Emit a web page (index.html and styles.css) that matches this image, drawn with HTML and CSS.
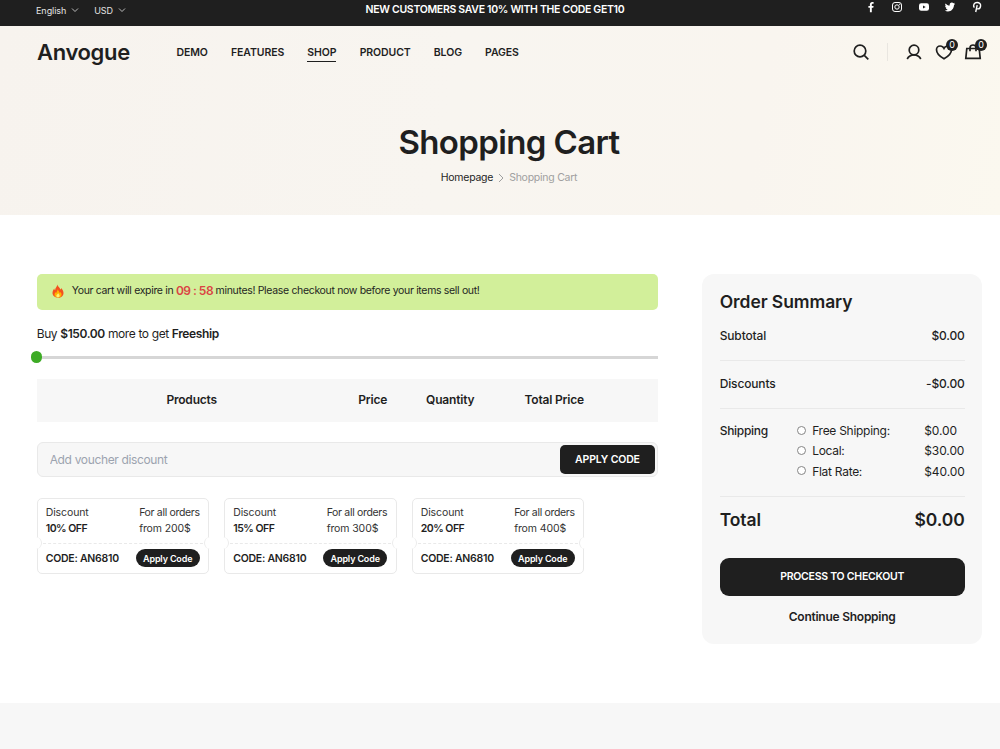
FILE: index.html
```html
<!DOCTYPE html>
<html lang="en">
<head>
    <meta charset="UTF-8">
    <meta name="viewport" content="width=device-width, initial-scale=1.0">
    <title>Anvogue - Shopping Cart</title>
    <link rel="stylesheet" href="styles.css">
</head>
<body>
    <div class="top-nav">
        <div class="top-left">
            <div class="choose"><span class="lang">English</span><svg class="caret" viewBox="0 0 8 8"><path d="M1 2.5l3 3 3-3"/></svg></div>
            <div class="choose"><span class="currency">USD</span><svg class="caret" viewBox="0 0 8 8"><path d="M1 2.5l3 3 3-3"/></svg></div>
        </div>
        <div class="top-text"><span>NEW CUSTOMERS SAVE 10% WITH THE CODE GET10</span></div>
        <div class="socials">
            <svg viewBox="0 0 12 12"><path fill="#fff" d="M4.9 11.2V6.8H3.4V4.900h1.500V3.500C4.900 1.900 5.800 1 7.200 1h1.400v1.700h-.9c-.7 0-.9.3-.9.9v1.300h1.800l-.3 1.900H6.800v4.400z"/></svg>
            <svg viewBox="0 0 12 12"><g fill="none" stroke="#fff"><rect x="1.500" y="1.500" width="9" height="9" rx="2.500"/><circle cx="6" cy="6" r="2.200"/></g><circle cx="8.700" cy="3.300" r=".6" fill="#fff"/></svg>
            <svg viewBox="0 0 12 12"><rect x="1" y="2.200" width="10" height="7.600" rx="2.200" fill="#fff"/><path fill="#1f1f1f" d="M5 4.400L7.700 6 5 7.600z"/></svg>
            <svg viewBox="0 0 12 12"><path fill="#fff" d="M11 3.100l-1 .9c-.1 3.800-2.700 6.400-6 6.400-1.200 0-2.300-.3-3.100-.9 1.100 0 2.100-.4 2.800-1C2.700 8.300 2.100 7.700 1.900 7h.8C1.700 6.600 1.200 5.800 1.200 4.900l.8.2C1.100 4.400 1 3.300 1.500 2.400 2.600 3.700 4 4.400 5.700 4.500c-.3-1.700.8-2.900 2.200-2.900.7 0 1.200.3 1.600.7.500-.1.900-.3 1.300-.5-.1.500-.4.900-.8 1.200z"/></svg>
            <svg viewBox="0 0 12 12"><path d="M3.300 6.700C1.600 4.200 3.300 1.500 6.100 1.500c2.400 0 3.700 1.600 3.500 3.400-.2 2-1.500 3.100-2.800 3-.8 0-1.300-.5-1.500-.9M6.200 4.100L4.700 11" fill="none" stroke="#fff" stroke-width="1.400"/></svg>
        </div>
    </div>

    <div class="hero">
        <div class="header">
            <a class="logo">Anvogue</a>
            <ul class="menu">
                <li>DEMO</li>
                <li>FEATURES</li>
                <li class="active">SHOP</li>
                <li>PRODUCT</li>
                <li>BLOG</li>
                <li>PAGES</li>
            </ul>
            <div class="actions">
                <svg class="icon search" viewBox="0 0 18 18"><circle cx="8" cy="8" r="5.800"/><path d="M12.300 12.300l4 4"/></svg>
                <svg class="icon user" viewBox="0 0 18 18"><circle cx="9" cy="7" r="4.800"/><path d="M2.200 16c1.300-2.500 3.900-4.200 6.800-4.200s5.500 1.700 6.800 4.200"/></svg>
                <div class="badge-icon">
                    <svg class="icon" viewBox="0 0 18 18"><path d="M9 15.700S1.500 11.600 1.500 6.700C1.500 4.600 3.100 3 5.100 3 6.900 3 8.300 4 9 5.400 9.700 4 11.100 3 12.900 3c2 0 3.600 1.600 3.600 3.700C16.500 11.600 9 15.700 9 15.700z"/></svg>
                    <span class="badge">0</span>
                </div>
                <div class="badge-icon bag">
                    <svg class="icon" viewBox="0 0 18 18"><path d="M2.800 5.500h12.400l1 9.800H1.800zM6 8.200V5c0-4 6-4 6 0v3.200"/></svg>
                    <span class="badge">0</span>
                </div>
            </div>
        </div>
        <h1>Shopping Cart</h1>
        <div class="breadcrumb">
            <a>Homepage</a>
            <svg viewBox="0 0 10 10"><path d="M3 1l4 4-4 4"/></svg>
            <span>Shopping Cart</span>
        </div>
    </div>

    <div class="cart">
        <div class="cart-left">
            <div class="countdown">
                <svg class="fire" viewBox="0 0 14 14"><path fill="#f4511e" d="M6.200.5c.6 2.200 2.800 3.100 3.200 5.100.5-.4.700-1 .7-1.700 1.600 1.500 2.400 3.200 2.400 5 0 2.900-2.300 4.800-5.400 4.800S1.500 11.700 1.500 9c0-2 .9-3.400 1.700-4.600.1.900.3 1.400.9 1.800C4.200 3.700 6.300 2.900 6.200.5z"/><path fill="#ffb300" d="M6.700 5.200c.3 1.500 1.800 2.200 2 3.700.4-.2.600-.6.700-1 .8.800 1.200 1.600 1.200 2.600 0 1.900-1.500 3-3.500 3s-3.600-1.200-3.600-3c0-1 .5-1.900 1.100-2.600.1.600.3.900.7 1.100.1-1.600 1.400-2.200 1.400-3.800z"/><path fill="#fff176" d="M7.100 9.200c.6.900 1.500 1.300 1.500 2.500 0 1-.7 1.700-1.600 1.700s-1.600-.7-1.600-1.600c0-1.100 1.300-1.600 1.700-2.600z"/></svg>
                <p><span>Your cart will expire in</span><b>09 : 58</b><span>minutes! Please checkout now before your items sell out!</span></p>
            </div>
            <p class="freeship">Buy <b>$150.00</b> more to get <b>Freeship</b></p>
            <div class="progress"><span class="dot"></span></div>
            <div class="table-head">
                <div>Products</div>
                <div>Price</div>
                <div>Quantity</div>
                <div>Total Price</div>
            </div>
            <div class="voucher">
                <input type="text" placeholder="Add voucher discount">
                <button>APPLY CODE</button>
            </div>
            <div class="coupons">
                <div class="coupon">
                    <div class="coupon-top">
                        <div>Discount<b>10% OFF</b></div>
                        <div class="orders"><span>For all orders</span><br>from 200$</div>
                    </div>
                    <div class="coupon-bottom"><b>CODE: AN6810</b><button>Apply Code</button></div>
                </div>
                <div class="coupon">
                    <div class="coupon-top">
                        <div>Discount<b>15% OFF</b></div>
                        <div class="orders"><span>For all orders</span><br>from 300$</div>
                    </div>
                    <div class="coupon-bottom"><b>CODE: AN6810</b><button>Apply Code</button></div>
                </div>
                <div class="coupon">
                    <div class="coupon-top">
                        <div>Discount<b>20% OFF</b></div>
                        <div class="orders"><span>For all orders</span><br>from 400$</div>
                    </div>
                    <div class="coupon-bottom"><b>CODE: AN6810</b><button>Apply Code</button></div>
                </div>
            </div>
        </div>

        <div class="summary">
            <h2>Order Summary</h2>
            <div class="row"><span>Subtotal</span><span>$0.00</span></div>
            <div class="row"><span>Discounts</span><span>-$0.00</span></div>
            <div class="shipping">
                <span class="label">Shipping</span>
                <div class="options">
                    <label><input type="radio" name="ship"><span>Free Shipping:</span></label>
                    <label><input type="radio" name="ship"><span>Local:</span></label>
                    <label><input type="radio" name="ship"><span>Flat Rate:</span></label>
                </div>
                <div class="prices">
                    <span>$0.00</span>
                    <span>$30.00</span>
                    <span>$40.00</span>
                </div>
            </div>
            <div class="total"><span>Total</span><span>$0.00</span></div>
            <button class="checkout">PROCESS TO CHECKOUT</button>
            <a class="continue">Continue Shopping</a>
        </div>
    </div>

    <div class="footer"></div>
</body>
</html>
```

FILE: styles.css
```css
* {
    box-sizing: border-box;
}

body {
    margin: 0;
    height: 749px;
    overflow: hidden;
    display: flex;
    flex-direction: column;
    background: #fff;
    color: #1f1f1f;
    font-family: 'Inter', sans-serif;
    font-size: 12px;
}

h1, h2, p, ul {
    margin: 0;
    padding: 0;
}

button {
    border: none;
    padding: 0;
    background: #1f1f1f;
    color: #fff;
    font-family: inherit;
    font-weight: 600;
}

b {
    font-weight: 600;
}

/* Top bar */
.top-nav {
    height: 26px;
    flex: none;
    background: #1f1f1f;
    color: #fff;
    display: grid;
    grid-template-columns: 329.5px 1fr 346px;
    padding: 0 17.5px 0 36px;
}

.top-left {
    display: flex;
    gap: 15px;
    height: 20px;
    align-items: center;
    font-size: 9px;
    color: #e3e3e3;
}

.choose {
    display: flex;
    align-items: center;
    gap: 5px;
}

.lang {
    letter-spacing: -0.05px;
}

.currency {
    letter-spacing: -0.2px;
}

.caret {
    width: 8px;
    height: 8px;
    fill: none;
    stroke: #ccc;
    stroke-width: 0.9;
}

.top-text {
    height: 20px;
    line-height: 20px;
    font-size: 10.5px;
    font-weight: 600;
    white-space: nowrap;
    letter-spacing: -0.3px;
}

.socials {
    display: flex;
    justify-content: flex-end;
    gap: 14.4px;
    padding-top: 1px;
}

.socials svg {
    width: 12px;
    height: 12px;
}

/* Header and page title */
.hero {
    height: 189px;
    flex: none;
    background: linear-gradient(100deg, #f7f3ee 0%, #f8f5f0 45%, #f9f5ef 75%, #fbf8ef 100%);
    display: flex;
    flex-direction: column;
    align-items: center;
}

.header {
    width: 100%;
    height: 52px;
    padding: 0 18px 0 37px;
    display: flex;
    align-items: center;
}

.logo {
    width: 139.5px;
    font-size: 22px;
    font-weight: 600;
    letter-spacing: -0.35px;
}

.menu {
    list-style: none;
    display: flex;
    gap: 23.2px;
    font-size: 10.5px;
    font-weight: 600;
    letter-spacing: -0.1px;
}

.menu li {
    height: 20px;
    line-height: 21px;
}

.menu .active {
    border-bottom: 1px solid #1f1f1f;
}

.actions {
    margin-left: auto;
    display: flex;
    align-items: center;
}

.icon {
    display: block;
    width: 18px;
    height: 18px;
    fill: none;
    stroke: #1f1f1f;
    stroke-width: 1.7;
}

.user {
    margin-left: 17.5px;
    margin-right: 12px;
}

.search {
    box-sizing: content-box;
    padding-right: 16.5px;
    border-right: 1px solid #e9e6e0;
}

.badge-icon {
    position: relative;
}

.bag {
    margin-left: 11px;
}

.badge {
    position: absolute;
    top: -4px;
    right: -5px;
    width: 12px;
    height: 12px;
    border-radius: 50%;
    background: #1f1f1f;
    color: #fff;
    font-size: 9px;
    line-height: 12px;
    text-align: center;
}

h1 {
    margin: 42px 0 0 18px;
    height: 44px;
    line-height: 44px;
    font-size: 33px;
    font-weight: 600;
    letter-spacing: -0.63px;
}

.breadcrumb {
    display: flex;
    align-items: center;
    margin: 5px 0 0 18px;
    height: 17px;
    font-size: 10.5px;
    letter-spacing: -0.25px;
    gap: 3px;
    color: #a0a0a0;
}

.breadcrumb a {
    color: #1f1f1f;
}

.breadcrumb svg {
    width: 10px;
    height: 10px;
    fill: none;
    stroke: #a0a0a0;
}

/* Cart */
.cart {
    height: 488px;
    flex: none;
    display: grid;
    grid-template-columns: 621px 280px;
    gap: 44.5px;
    padding: 58.5px 0 0 36.7px;
    align-items: start;
}

.countdown {
    height: 36.5px;
    border-radius: 5px;
    background: #d2ef9a;
    display: flex;
    align-items: center;
    padding: 0 14px 2px;
    gap: 7px;
    font-size: 10.5px;
    letter-spacing: -0.33px;
}

.countdown p {
    display: flex;
    align-items: center;
    gap: 2.5px;
    white-space: nowrap;
}

.countdown b {
    color: #db4444;
    font-size: 12px;
    letter-spacing: -0.5px;
}

.fire {
    width: 14px;
    height: 14px;
}

.freeship {
    height: 20px;
    line-height: 20px;
    margin-top: 13.5px;
    font-size: 12px;
    letter-spacing: -0.38px;
}

.progress {
    position: relative;
    height: 3px;
    margin-top: 12px;
    background: #d6d6d6;
}

.dot {
    position: absolute;
    left: -6px;
    top: -4.5px;
    width: 11.5px;
    height: 11.5px;
    border-radius: 50%;
    background: #3dab25;
}

.table-head {
    height: 43px;
    margin-top: 20.5px;
    padding-bottom: 2px;
    background: #f7f7f7;
    display: grid;
    grid-template-columns: 310px 52px 103px 105px;
    align-items: center;
    text-align: center;
    font-size: 12px;
    font-weight: 600;
    letter-spacing: -0.2px;
}

.voucher {
    height: 35px;
    margin-top: 20px;
    padding: 2px 2px 2px 12px;
    border: 1px solid #e9e9e9;
    border-radius: 6px;
    background: #f7f7f7;
    display: flex;
}

.voucher input {
    flex: 1;
    border: none;
    padding: 0;
    background: none;
    font-family: inherit;
    font-size: 12px;
    letter-spacing: -0.35px;
}

.voucher input::placeholder {
    color: #9ca3af;
}

.voucher button {
    width: 94.5px;
    border-radius: 5px;
    font-size: 10.5px;
    letter-spacing: -0.15px;
}

.coupons {
    display: flex;
    gap: 15px;
    margin-top: 20.5px;
}

.coupon {
    position: relative;
    width: 172.5px;
    height: 76px;
    border: 1px solid #e9e9e9;
    border-radius: 5px;
    font-size: 10.5px;
}

/* notches on the tear line */
.coupon::before,
.coupon::after {
    content: "";
    position: absolute;
    top: 38px;
    left: -5px;
    width: 8px;
    height: 12px;
    background: #fff;
    border-right: 1px solid #ececec;
    border-radius: 0 6px 6px 0;
}

.coupon::after {
    left: auto;
    right: -5px;
    border-right: none;
    border-left: 1px solid #ececec;
    border-radius: 6px 0 0 6px;
}

.coupon-top {
    height: 45px;
    padding: 6px 8.5px 0 8px;
    border-bottom: 1px dashed #e9e9e9;
    display: flex;
    justify-content: space-between;
    line-height: 16px;
    color: #333;
    white-space: nowrap;
    letter-spacing: -0.1px;
}

.coupon-top b {
    display: block;
    color: #1f1f1f;
    letter-spacing: -0.5px;
}

.orders span {
    letter-spacing: -0.32px;
}

.coupon-bottom {
    height: 29px;
    padding: 0 8.5px 0 8px;
    display: flex;
    align-items: center;
    justify-content: space-between;
    white-space: nowrap;
    letter-spacing: -0.25px;
}

.coupon-bottom button {
    width: 64px;
    height: 18px;
    border-radius: 9px;
    font-size: 9px;
    letter-spacing: -0.15px;
}

/* Order summary */
.summary {
    height: 370.5px;
    padding: 17px 17.5px 0;
    border-radius: 12px;
    background: #f7f7f7;
    display: flex;
    flex-direction: column;
}

h2 {
    height: 22px;
    line-height: 22px;
    font-size: 17.5px;
    font-weight: 600;
    letter-spacing: -0.08px;
}

.row {
    height: 48px;
    padding-top: 13px;
    display: flex;
    justify-content: space-between;
    line-height: 20px;
    border-bottom: 1px solid #e9e9e9;
    font-weight: 500;
    letter-spacing: -0.15px;
}

.shipping {
    height: 88.5px;
    padding-top: 12.5px;
    border-bottom: 1px solid #e9e9e9;
    display: flex;
    line-height: 20px;
    letter-spacing: -0.28px;
}

.label {
    width: 78px;
    font-weight: 500;
}

.options {
    width: 128px;
}

.options label {
    display: flex;
    align-items: center;
    gap: 6px;
    height: 20.3px;
}

.options input {
    appearance: none;
    width: 9px;
    height: 9px;
    margin: 0 0 2px;
    border: 1px solid #858585;
    border-radius: 50%;
    background: #fff;
}

.prices span {
    display: block;
    height: 20.3px;
    letter-spacing: -0.1px;
}

.total {
    height: 61px;
    padding-top: 10px;
    display: flex;
    justify-content: space-between;
    line-height: 26px;
    font-size: 17.5px;
    font-weight: 600;
    letter-spacing: -0.1px;
}

.checkout {
    height: 38px;
    padding-bottom: 1px;
    border-radius: 9px;
    font-size: 10.5px;
    letter-spacing: -0.25px;
}

.continue {
    margin-top: 11px;
    line-height: 20px;
    font-weight: 600;
    text-align: center;
    letter-spacing: -0.25px;
}

.footer {
    flex: 1;
    background: #f7f7f7;
}
```
